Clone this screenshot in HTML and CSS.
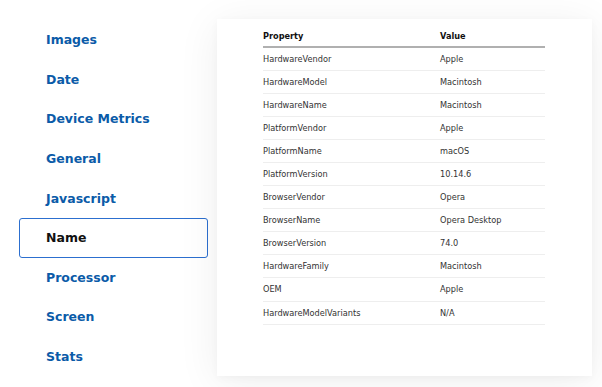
FILE: index.html
```html
<!DOCTYPE html>
<html>
<head>
<meta charset="utf-8">
<link rel="stylesheet" href="styles.css">
</head>
<body>
<div class="page">
  <nav class="nav">
    <div class="item">Images</div>
    <div class="item">Date</div>
    <div class="item">Device Metrics</div>
    <div class="item">General</div>
    <div class="item">Javascript</div>
    <div class="item active">Name</div>
    <div class="item">Processor</div>
    <div class="item">Screen</div>
    <div class="item">Stats</div>
  </nav>
  <div class="card">
    <table class="props">
      <thead>
        <tr><th class="c1">Property</th><th>Value</th></tr>
      </thead>
      <tbody>
        <tr><td>HardwareVendor</td><td>Apple</td></tr>
        <tr><td>HardwareModel</td><td>Macintosh</td></tr>
        <tr><td>HardwareName</td><td>Macintosh</td></tr>
        <tr><td>PlatformVendor</td><td>Apple</td></tr>
        <tr><td>PlatformName</td><td>macOS</td></tr>
        <tr><td>PlatformVersion</td><td>10.14.6</td></tr>
        <tr><td>BrowserVendor</td><td>Opera</td></tr>
        <tr><td>BrowserName</td><td>Opera Desktop</td></tr>
        <tr><td>BrowserVersion</td><td>74.0</td></tr>
        <tr><td>HardwareFamily</td><td>Macintosh</td></tr>
        <tr><td>OEM</td><td>Apple</td></tr>
        <tr><td>HardwareModelVariants</td><td>N/A</td></tr>
      </tbody>
    </table>
  </div>
</div>
</body>
</html>
```
FILE: styles.css
```css
html, body {
  margin: 0;
  padding: 0;
  background: #fff;
}
body {
  width: 602px;
  height: 387px;
  overflow: hidden;
  font-family: "DejaVu Sans", Verdana, sans-serif;
}
.page {
  display: flex;
  align-items: flex-start;
  padding-left: 19px;
}
.nav {
  width: 189px;
  padding-top: 20px;
  display: flex;
  flex-direction: column;
}
.item {
  box-sizing: border-box;
  height: 39.6px;
  display: flex;
  align-items: center;
  padding-left: 26px;
  font-size: 12.5px;
  font-weight: bold;
  color: #0b5ba8;
  border: 1px solid transparent;
  border-radius: 3px;
}
.item.active {
  color: #111;
  border-color: #2c6fcf;
}
.card {
  margin-left: 9px;
  margin-top: 19px;
  width: 375px;
  height: 357px;
  box-sizing: border-box;
  padding: 0 47px 0 46px;
  background: #fff;
  box-shadow: 0 6px 40px rgba(0, 0, 0, 0.07), 0 2px 8px rgba(0, 0, 0, 0.03);
}
.props {
  width: 100%;
  border-collapse: collapse;
  font-size: 8.2px;
  color: #333;
}
.props th {
  text-align: left;
  font-weight: bold;
  color: #111;
  height: 28px;
  padding: 7px 0 0 0;
  box-sizing: border-box;
  border-bottom: 2px solid #b0b0b0;
  vertical-align: middle;
}
.props th.c1 {
  width: 177px;
}
.props td {
  height: 23.1px;
  padding: 0;
  box-sizing: border-box;
  border-bottom: 1px solid #eeeeee;
  vertical-align: middle;
}
```
